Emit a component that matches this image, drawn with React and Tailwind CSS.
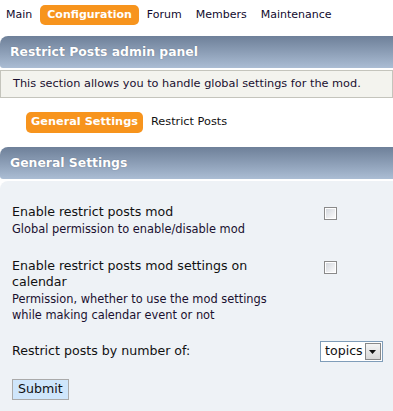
const font = { fontFamily: '"DejaVu Sans", Verdana, sans-serif' };

function NavItem({ label, active }) {
  if (active) {
    return (
      <span className="rounded-[5px] bg-[#f7941d] px-[7px] py-[2px] font-bold text-white">{label}</span>
    );
  }
  return <span className="px-[6px] text-[#110a2e]">{label}</span>;
}

function HeaderBar({ title }) {
  return (
    <div className="flex h-[32px] items-center rounded-tl-[8px] rounded-bl-[3px] bg-gradient-to-b from-[#6e8099] to-[#abbdd4] pl-[10px] text-[12.4px] font-bold text-white [text-shadow:0_0_1px_rgba(60,70,90,0.6)]">
      {title}
    </div>
  );
}

function FakeCheckbox() {
  return (
    <div className="h-[13px] w-[13px] border border-[#8a8a8a] bg-white p-[1px]">
      <div className="h-full w-full bg-gradient-to-br from-[#d4d8de] to-[#fbfbfb]" />
    </div>
  );
}

function SettingRow({ label, desc }) {
  return (
    <div className="flex items-start">
      <div className="w-[282px] pl-[12px]">
        <div className="text-[12.6px] leading-[16px] text-[#111]">{label}</div>
        <div className="mt-[1px] text-[11.4px] leading-[16px] text-[#1a1030]">{desc}</div>
      </div>
      <div className="pl-[42px] pt-[3px]">
        <FakeCheckbox />
      </div>
    </div>
  );
}

export default function App() {
  return (
    <div className="h-[411px] w-[393px] overflow-hidden bg-white" style={font}>
      <div className="flex h-[30px] items-center gap-[2px] text-[11px]">
        <NavItem label="Main" />
        <NavItem label="Configuration" active />
        <NavItem label="Forum" />
        <NavItem label="Members" />
        <NavItem label="Maintenance" />
      </div>

      <div className="mt-[6px]">
        <HeaderBar title="Restrict Posts admin panel" />
        <div className="mt-[2px] flex h-[28px] items-center border border-[#c4c4bc] bg-[#f3f3ee] pl-[12px] text-[11.3px] text-[#1a1030]">
          This section allows you to handle global settings for the mod.
        </div>
      </div>

      <div className="flex h-[49px] items-center gap-[8px] pl-[26px] text-[11.3px]">
        <span className="rounded-[5px] bg-[#f7941d] px-[5px] py-[2px] font-bold text-white">General Settings</span>
        <span className="text-[#111]">Restrict Posts</span>
      </div>

      <HeaderBar title="General Settings" />
      <div className="mt-[2px] h-[240px] rounded-tl-[8px] bg-[#eef2f6] pt-[23px]">
        <SettingRow label="Enable restrict posts mod" desc="Global permission to enable/disable mod" />
        <div className="h-[21px]" />
        <SettingRow
          label="Enable restrict posts mod settings on calendar"
          desc="Permission, whether to use the mod settings while making calendar event or not"
        />
        <div className="mt-[18px] flex items-center">
          <div className="w-[320px] pl-[12px] text-[12.6px] text-[#111]">Restrict posts by number of:</div>
          <div className="flex h-[21px] items-center border border-[#7f9db9] bg-white pl-[4px]">
            <span className="text-[12.6px] text-[#111]">topics</span>
            <span className="ml-[2px] mr-[1px] flex h-[17px] w-[16px] items-center justify-center border border-[#888] bg-gradient-to-b from-[#f4f4f4] to-[#d8d8d8]">
              <svg width="7" height="4" viewBox="0 0 7 4">
                <path d="M0 0h7L3.5 4z" fill="#111" />
              </svg>
            </span>
          </div>
        </div>
        <div className="mt-[14px] pl-[12px]">
          <button type="button" className="h-[21px] border border-[#aaa] bg-[#cfe6fb] px-[5px] text-[12.6px] text-[#111]">
            Submit
          </button>
        </div>
      </div>
    </div>
  );
}
